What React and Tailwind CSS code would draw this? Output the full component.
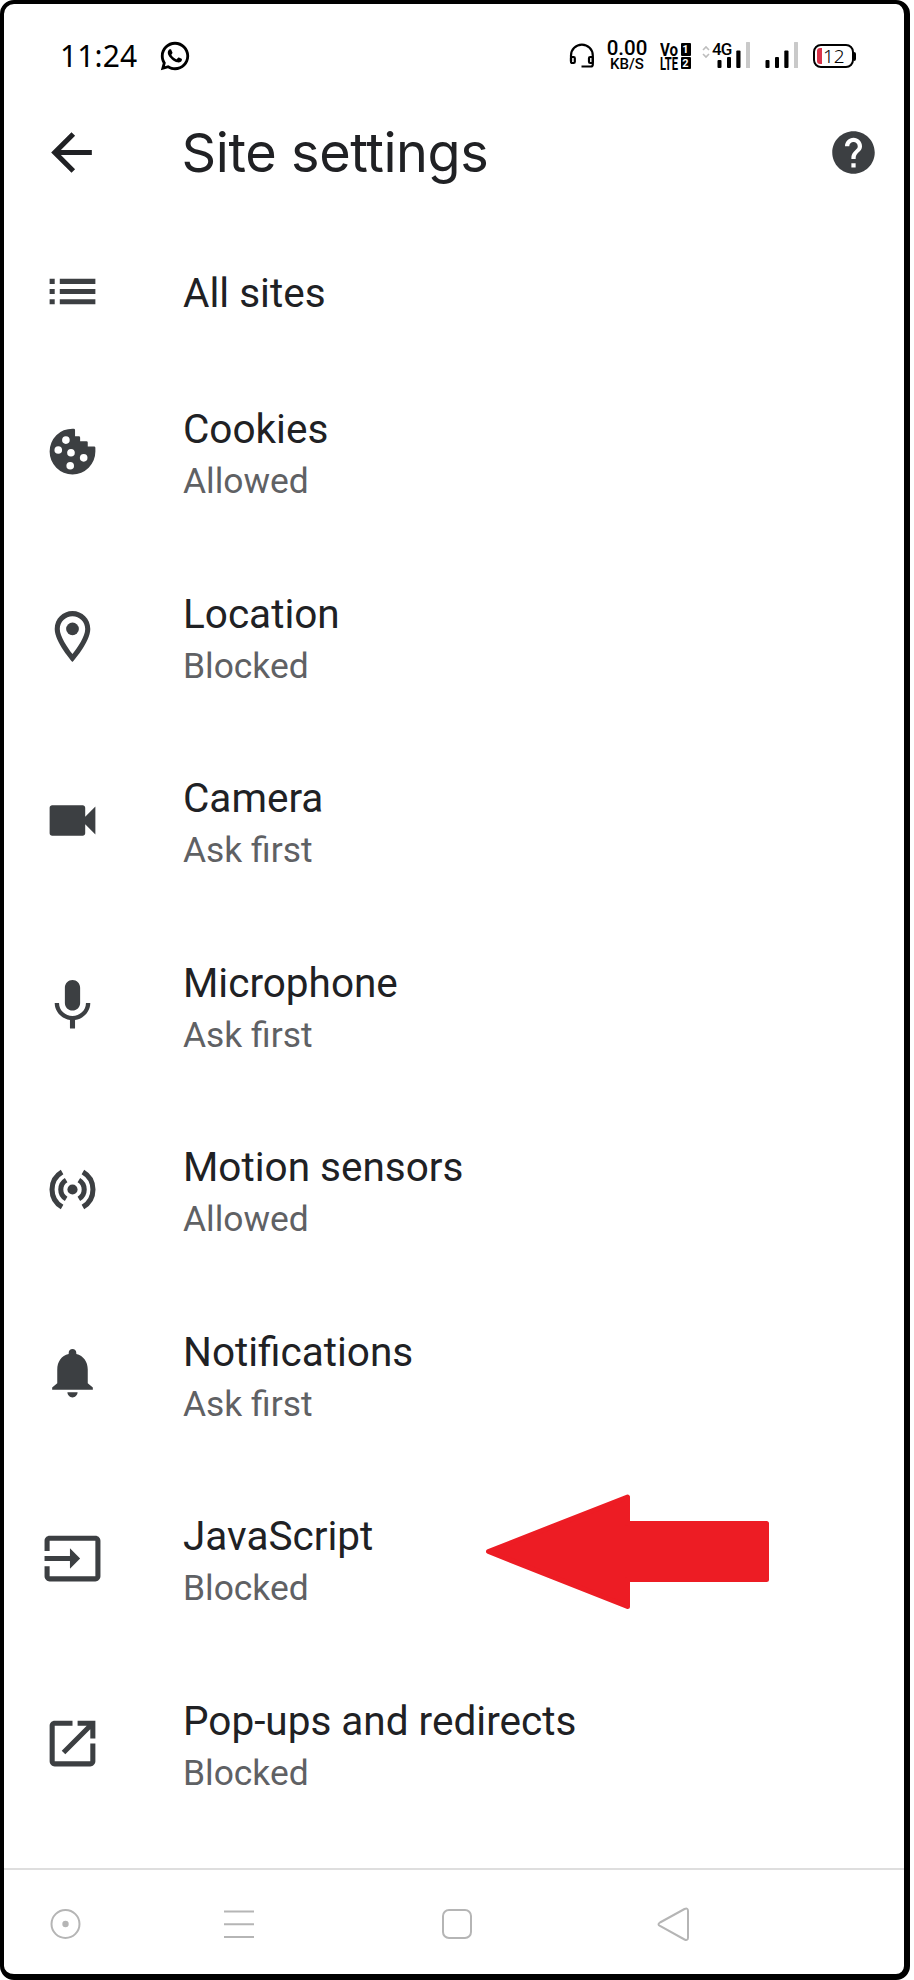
import React from "react";
import { RiWhatsappLine } from "react-icons/ri";

function Icon({ children }) {
  return (
    <svg viewBox="0 0 24 24" className="size-[61px] shrink-0 fill-[#3c3f42]">
      {children}
    </svg>
  );
}

const ICONS = {
  list: (
    <path d="M3 13h2v-2H3v2zm0 4h2v-2H3v2zm0-8h2V7H3v2zm4 4h14v-2H7v2zm0 4h14v-2H7v2zM7 7v2h14V7H7z" />
  ),
  cookie: (
    <>
      <path d="M12 3a9 9 0 1 0 9 9v-1.500q0-.5-.5-.5H18V8.500q0-.5-.5-.5H15V6.500q0-.5-.5-.5H13V3.500q0-.5-.5-.5z" />
      <g fill="#fff">
        <circle cx="9.400" cy="7.500" r="1.500" />
        <circle cx="6.400" cy="11.400" r="1.500" />
        <circle cx="11.400" cy="12.500" r="1.500" />
        <circle cx="16.400" cy="14.500" r="1.500" />
        <circle cx="11.100" cy="17.600" r="1.500" />
      </g>
    </>
  ),
  pin: (
    <>
      <path d="M12 2C8.130 2 5 5.130 5 9c0 5.250 7 13 7 13s7-7.750 7-13c0-3.870-3.130-7-7-7zM7 9c0-2.760 2.240-5 5-5s5 2.240 5 5c0 2.880-2.880 7.190-5 9.880C9.920 16.210 7 11.850 7 9z" />
      <circle cx="12" cy="9" r="2.500" />
    </>
  ),
  camera: (
    <path d="M17 10.500V7c0-.55-.45-1-1-1H4c-.55 0-1 .45-1 1v10c0 .55.45 1 1 1h12c.55 0 1-.45 1-1v-3.500l4 4v-11l-4 4z" />
  ),
  mic: (
    <path d="M12 14c1.660 0 3-1.340 3-3V5c0-1.660-1.340-3-3-3S9 3.340 9 5v6c0 1.660 1.340 3 3 3zm5.300-3c0 3-2.540 5.100-5.300 5.100S6.700 14 6.700 11H5c0 3.410 2.720 6.230 6 6.720V21h2v-3.280c3.280-.48 6-3.300 6-6.720h-1.700z" />
  ),
  motion: (
    <>
      <circle cx="12" cy="12" r="2" />
      <g fill="none" stroke="#3c3f42" strokeWidth="2">
        <path d="M7.900 5.100a8 8 0 0 0 0 13.800M16.100 5.100a8 8 0 0 1 0 13.800" />
        <path d="M9.500 8.300a4.300 4.300 0 0 0 0 7.400M14.500 8.300a4.300 4.300 0 0 1 0 7.400" />
      </g>
    </>
  ),
  bell: (
    <path d="M12 21c1.100 0 2-.9 2-2h-4c0 1.100.9 2 2 2zm6-5.600V10c0-3.070-1.640-5.400-4.500-6.100V3.500C13.500 2.670 12.830 2 12 2s-1.500.67-1.500 1.500v.4C7.630 4.600 6 6.920 6 10v5.400l-2 1.700V18h16v-.9l-2-1.700z" />
  ),
  input: (
    <path d="M21 3H3c-1.100 0-2 .9-2 2v4h2V5h18v14H3v-4H1v4c0 1.100.9 2 2 2h18c1.100 0 2-.9 2-2V5c0-1.100-.9-2-2-2zM11 16l4-4-4-4v3H1v2h10v3z" />
  ),
  popup: (
    <path d="M19 19H5V5h7V3H5c-1.110 0-2 .9-2 2v14c0 1.100.89 2 2 2h14c1.100 0 2-.9 2-2v-7h-2v7zM14 3v2h3.590l-9.830 9.830 1.410 1.410L19 6.410V10h2V3h-7z" />
  ),
};

const SETTINGS = [
  { icon: "cookie", title: "Cookies", state: "Allowed" },
  { icon: "pin", title: "Location", state: "Blocked" },
  { icon: "camera", title: "Camera", state: "Ask first" },
  { icon: "mic", title: "Microphone", state: "Ask first" },
  { icon: "motion", title: "Motion sensors", state: "Allowed" },
  { icon: "bell", title: "Notifications", state: "Ask first" },
  { icon: "input", title: "JavaScript", state: "Blocked", pointed: true },
  { icon: "popup", title: "Pop-ups and redirects", state: "Blocked" },
];

function SignalBars() {
  return (
    <svg viewBox="0 0 34 28" className="h-7 w-[34px] shrink-0">
      <rect x="0.500" y="18" width="4" height="8" rx="1" />
      <rect x="10" y="15" width="4" height="11" rx="1" />
      <rect x="19.300" y="8.500" width="4.200" height="17.500" rx="1" />
      <rect x="29" width="4" height="26" rx="0.500" fill="#c9c9c9" />
    </svg>
  );
}

function StatusBar() {
  return (
    <div className="flex h-[104px] items-center pl-[56px] text-black">
      <span className="w-[80px] font-['Noto_Sans'] text-[30px] leading-none tracking-[0.100px]">
        11:24
      </span>
      <RiWhatsappLine className="ml-[17.500px] size-[34px]" />

      <svg viewBox="0 0 26 26" className="ml-[377px] size-[26px] shrink-0" fill="none" stroke="#000" strokeWidth="2.200">
        <path d="M2 18V12.500a10.900 10.900 0 0 1 21.800 0V21.500a2 2 0 0 1-2 2H12.500" />
        <rect x="2" y="14" width="3.800" height="6" rx="1.200" />
        <rect x="20" y="14" width="3.800" height="6" rx="1.200" />
      </svg>

      <div className="ml-[9.500px] flex w-[46px] flex-col items-center font-['Roboto'] font-medium">
        <span className="text-[20.500px] leading-[17px]">0.00</span>
        <span className="text-[15px] leading-[15px]">KB/S</span>
      </div>

      <div className="ml-[10px] grid w-[31px] grid-cols-[20.500px_10px] gap-y-px font-['Roboto'] text-[18px] font-bold leading-[13px]">
        <span className="h-[13px] origin-left scale-x-[0.840]">Vo</span>
        <span className="flex h-[13px] items-center justify-center rounded-[1px] bg-black text-[11px] text-white">1</span>
        <span className="h-[12px] origin-left scale-x-[0.620]">LTE</span>
        <span className="flex h-[12px] items-center justify-center rounded-[1px] bg-black text-[11px] text-white">2</span>
      </div>

      <svg viewBox="0 0 8 14" className="mb-[9px] ml-[11px] h-[14px] w-[8px] shrink-0" fill="none" stroke="#bdbdbd" strokeWidth="1.600">
        <path d="M1 5l3-3 3 3M1 9l3 3 3-3" />
      </svg>
      <div className="relative ml-[7px] flex">
        <span className="absolute -left-[5px] -top-[1px] font-['Roboto'] text-[17px] font-medium leading-[16px] tracking-[-1px]">
          4G
        </span>
        <SignalBars />
      </div>
      <div className="ml-[14px] flex">
        <SignalBars />
      </div>

      <div className="ml-[14px] flex items-center">
        <div className="flex h-[24px] w-[41px] items-center rounded-[8px] border-2 border-black pl-[2px]">
          <span className="h-[16px] w-[5px] rounded-l-[3px] bg-[#d8344a]" />
          <span className="ml-px font-['Noto_Sans'] text-[19px] font-light leading-none">12</span>
        </div>
        <span className="h-[9px] w-[2px] rounded-r-[2px] bg-black" />
      </div>
    </div>
  );
}

function Header() {
  return (
    <header className="flex h-[95px] items-center pb-[6px] pl-[37px] pr-[25px]">
      <svg viewBox="0 0 24 24" className="size-[61px] shrink-0 fill-[#202124]">
        <path d="M20 11H7.830l5.590-5.590L12 4l-8 8 8 8 1.410-1.410L7.830 13H20v-2z" />
      </svg>
      <h1 className="ml-[79.500px] grow font-['Inter'] text-[54px] font-normal leading-none tracking-[-0.400px] text-[#202124]">
        Site settings
      </h1>
      <svg viewBox="0 0 24 24" className="size-[51px] shrink-0 fill-[#3c3f42]">
        <path d="M12 2C6.480 2 2 6.480 2 12s4.480 10 10 10 10-4.480 10-10S17.520 2 12 2zm1 17h-2v-2h2v2zm2.070-7.750l-.9.920C13.450 12.900 13 13.500 13 15h-2v-.5c0-1.100.45-2.100 1.170-2.830l1.240-1.260c.37-.36.59-.86.59-1.410 0-1.100-.9-2-2-2s-2 .9-2 2H8c0-2.210 1.790-4 4-4s4 1.790 4 4c0 .88-.36 1.680-.93 2.250z" />
      </svg>
    </header>
  );
}

function RedArrow() {
  return (
    <svg viewBox="0 0 284 116" className="absolute left-[482px] top-[27px] h-[116px] w-[284px]">
      <path
        d="M2.500 57.500L141.500 3V29.500H280.500V85.500H141.500V112.500z"
        fill="#ed1c24"
        stroke="#ed1c24"
        strokeWidth="5"
        strokeLinejoin="round"
      />
    </svg>
  );
}

function NavBar() {
  return (
    <nav className="flex grow items-start border-t-2 border-[#dedede] pl-[44px] pt-[36px]">
      <svg viewBox="0 0 36 36" className="size-9" fill="none" stroke="#b5b5b5" strokeWidth="2">
        <circle cx="17.500" cy="18" r="14" />
        <circle cx="17.500" cy="18" r="3.200" fill="#b5b5b5" stroke="none" />
      </svg>
      <svg viewBox="0 0 36 36" className="ml-[137px] size-9" fill="none" stroke="#b5b5b5" strokeWidth="2">
        <path d="M3 5.500H33M3 18.200H33M3 31H33" />
      </svg>
      <svg viewBox="0 0 36 36" className="ml-[182px] size-9" fill="none" stroke="#b5b5b5" strokeWidth="2">
        <rect x="4" y="4" width="28" height="28" rx="6" />
      </svg>
      <svg viewBox="0 0 36 36" className="ml-[181px] size-9" fill="none" stroke="#b5b5b5" strokeWidth="2">
        <path d="M4 16.500L28.500 3Q32 1.500 32 5V31.500Q32 35 28.500 33.500L4 20Q1 18.200 4 16.500z" />
      </svg>
    </nav>
  );
}

export default function App() {
  return (
    <div className="h-[1980px] w-[914px] bg-white">
      <div className="flex h-[1980px] w-[910px] flex-col overflow-hidden rounded-[14px] border-b-[6px] border-l-[4px] border-r-[6px] border-t-[4px] border-black bg-white">
        <StatusBar />
        <Header />
        <main className="mt-[19.500px] font-['Roboto'] text-[#202124]">
          <div className="flex h-[137px] items-center pl-[38px]">
            <Icon>{ICONS.list}</Icon>
            <span className="ml-[80px] pt-[4px] text-[40.500px] leading-none">All sites</span>
          </div>
          {SETTINGS.map((s) => (
            <div key={s.title} className="relative flex h-[184.500px] items-center pl-[38px]">
              <Icon>{ICONS[s.icon]}</Icon>
              <div className="ml-[80px] flex flex-col whitespace-nowrap pt-[6px]">
                <span className="text-[40.500px] leading-[54px]">{s.title}</span>
                <span className="text-[35.400px] leading-[51px] text-[#5f6164]">{s.state}</span>
              </div>
              {s.pointed && <RedArrow />}
            </div>
          ))}
        </main>
        <div className="h-[32px] shrink-0" />
        <NavBar />
      </div>
    </div>
  );
}
